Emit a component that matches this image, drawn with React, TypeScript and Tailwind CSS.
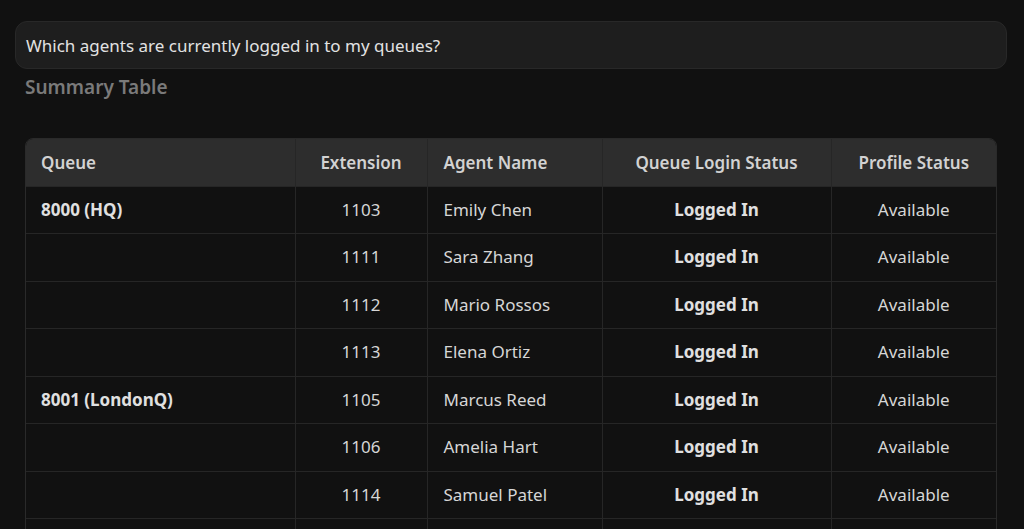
import React from 'react';

const rows = [
  { queue: '8000 (HQ)', ext: '1103', name: 'Emily Chen' },
  { queue: '', ext: '1111', name: 'Sara Zhang' },
  { queue: '', ext: '1112', name: 'Mario Rossos' },
  { queue: '', ext: '1113', name: 'Elena Ortiz' },
  { queue: '8001 (LondonQ)', ext: '1105', name: 'Marcus Reed' },
  { queue: '', ext: '1106', name: 'Amelia Hart' },
  { queue: '', ext: '1114', name: 'Samuel Patel' },
];

const cell = 'border border-[#262626] px-[15px] py-3 leading-[22.5px]';
const head = 'border border-[#262626] px-[15px] pt-[13px] pb-[11px] leading-[22.5px] border-t-0 font-semibold';

const App = () => {
  return (
    <div
      className="h-screen overflow-hidden bg-[#111111] pt-[21px] pl-[15px] pr-[17px] text-[#d6d6d6]"
      style={{ fontFamily: '"Noto Sans", "Open Sans", sans-serif' }}
    >
      {/* Question bubble */}
      <div className="h-[48px] flex items-center rounded-[12px] border border-[#282828] bg-[#1e1e1e] px-[10px] pt-[1px] text-[17px] text-[#e2e2e2]">
        Which agents are currently logged in to my queues?
      </div>

      <div className="px-[10px]">
        <h2 className="mt-[5px] text-[19px] font-semibold leading-[26px] text-[#7a7a7a]">Summary Table</h2>

        {/* Table */}
        <div className="mt-[38px] overflow-hidden rounded-t-[8px] border border-[#2a2a2a]">
          <table className="w-full table-fixed border-collapse text-[17px]">
            <colgroup>
              <col className="w-[269px]" />
              <col className="w-[132px]" />
              <col className="w-[175px]" />
              <col className="w-[229px]" />
              <col />
            </colgroup>
            <thead>
              <tr className="bg-[#2d2d2d] text-[#d2d2d2]">
                <th className={`${head} border-l-0 text-left`}>Queue</th>
                <th className={`${head} text-center`}>Extension</th>
                <th className={`${head} pl-[16px] text-left`}>Agent Name</th>
                <th className={`${head} text-center`}>Queue Login Status</th>
                <th className={`${head} border-r-0 text-center`}>Profile Status</th>
              </tr>
            </thead>
            <tbody className="bg-[#111111]">
              {rows.map((r) => (
                <tr key={r.ext}>
                  <td className={`${cell} border-l-0 font-bold text-[#e0e0e0]`}>{r.queue}</td>
                  <td className={`${cell} text-center`}>{r.ext}</td>
                  <td className={`${cell} pl-[16px]`}>{r.name}</td>
                  <td className={`${cell} text-center font-bold text-[#e0e0e0]`}>Logged In</td>
                  <td className={`${cell} border-r-0 text-center`}>Available</td>
                </tr>
              ))}
              <tr>
                <td className={`${cell} border-l-0`}>&nbsp;</td>
                <td className={cell} />
                <td className={cell} />
                <td className={cell} />
                <td className={`${cell} border-r-0`} />
              </tr>
            </tbody>
          </table>
        </div>
      </div>
    </div>
  );
};

export default App;
